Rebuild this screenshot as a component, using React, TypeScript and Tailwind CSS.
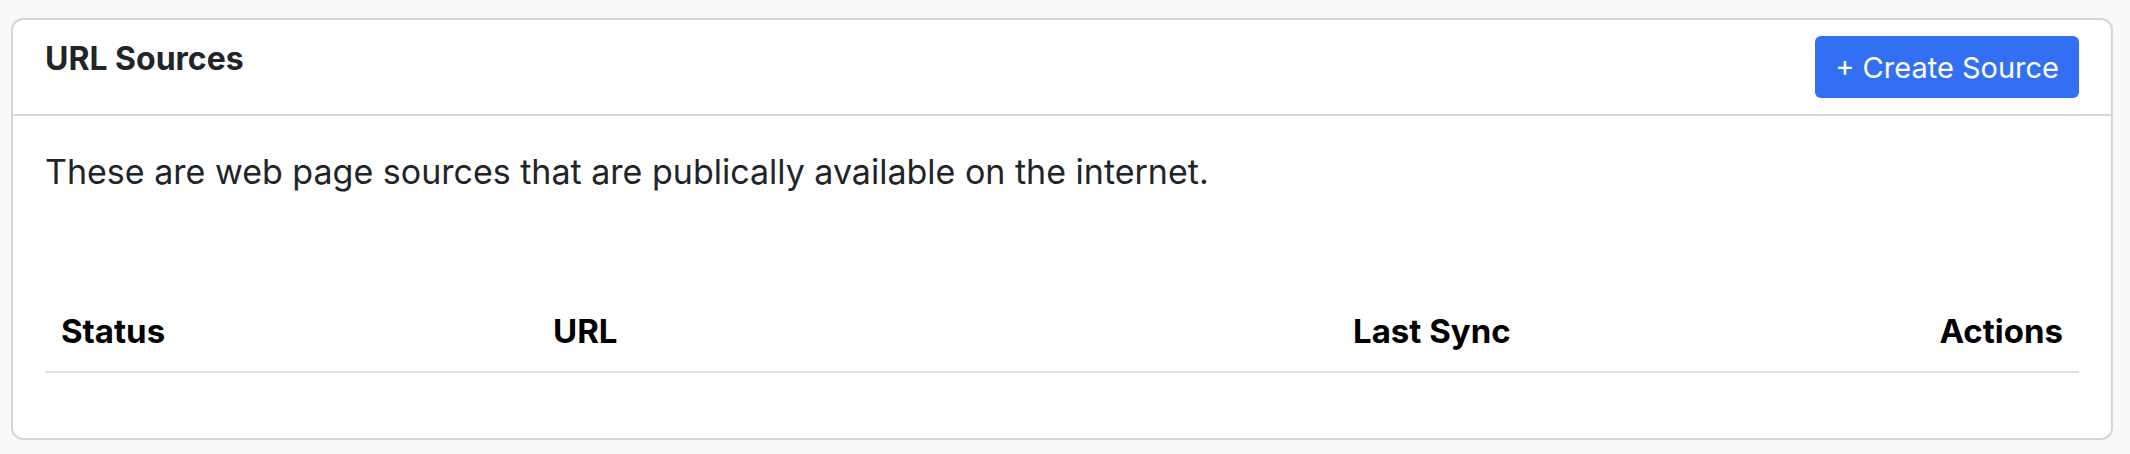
import React from "react";

export default function App() {
  const font = { fontFamily: "Inter, 'Noto Sans', sans-serif" };
  return (
    <div className="min-h-screen w-full bg-[#f8f9fa] pt-[18px] pl-[11px] pr-[17px] pb-[16px]" style={font}>
      <div className="rounded-[12px] border-2 border-[#d5d5d5] bg-white">
        <div className="flex items-start justify-between border-b-2 border-[#d9d9d9] px-8 pt-4 pb-4">
          <h2 className="mt-[7px] text-[32px] font-bold leading-none text-[#212529]">URL Sources</h2>
          <button className="flex h-[62px] items-center rounded-[6px] bg-[#336ff3] px-5 text-[29px] leading-none text-white">
            + Create Source
          </button>
        </div>
        <div className="px-8 pt-[39px] pb-[65px]">
          <p className="text-[34px] leading-none text-[#212529]">
            These are web page sources that are publically available on the internet.
          </p>
          <div className="mt-[110px] grid grid-cols-[492px_800px_1fr_auto] border-b-2 border-[#dee2e6] text-[33px] font-bold leading-none text-black">
            <div className="px-4 pt-4 pb-[23px]">Status</div>
            <div className="px-4 pt-4 pb-[23px]">URL</div>
            <div className="px-4 pt-4 pb-[23px]">Last Sync</div>
            <div className="px-4 pt-4 pb-[23px] text-right">Actions</div>
          </div>
        </div>
      </div>
    </div>
  );
}
